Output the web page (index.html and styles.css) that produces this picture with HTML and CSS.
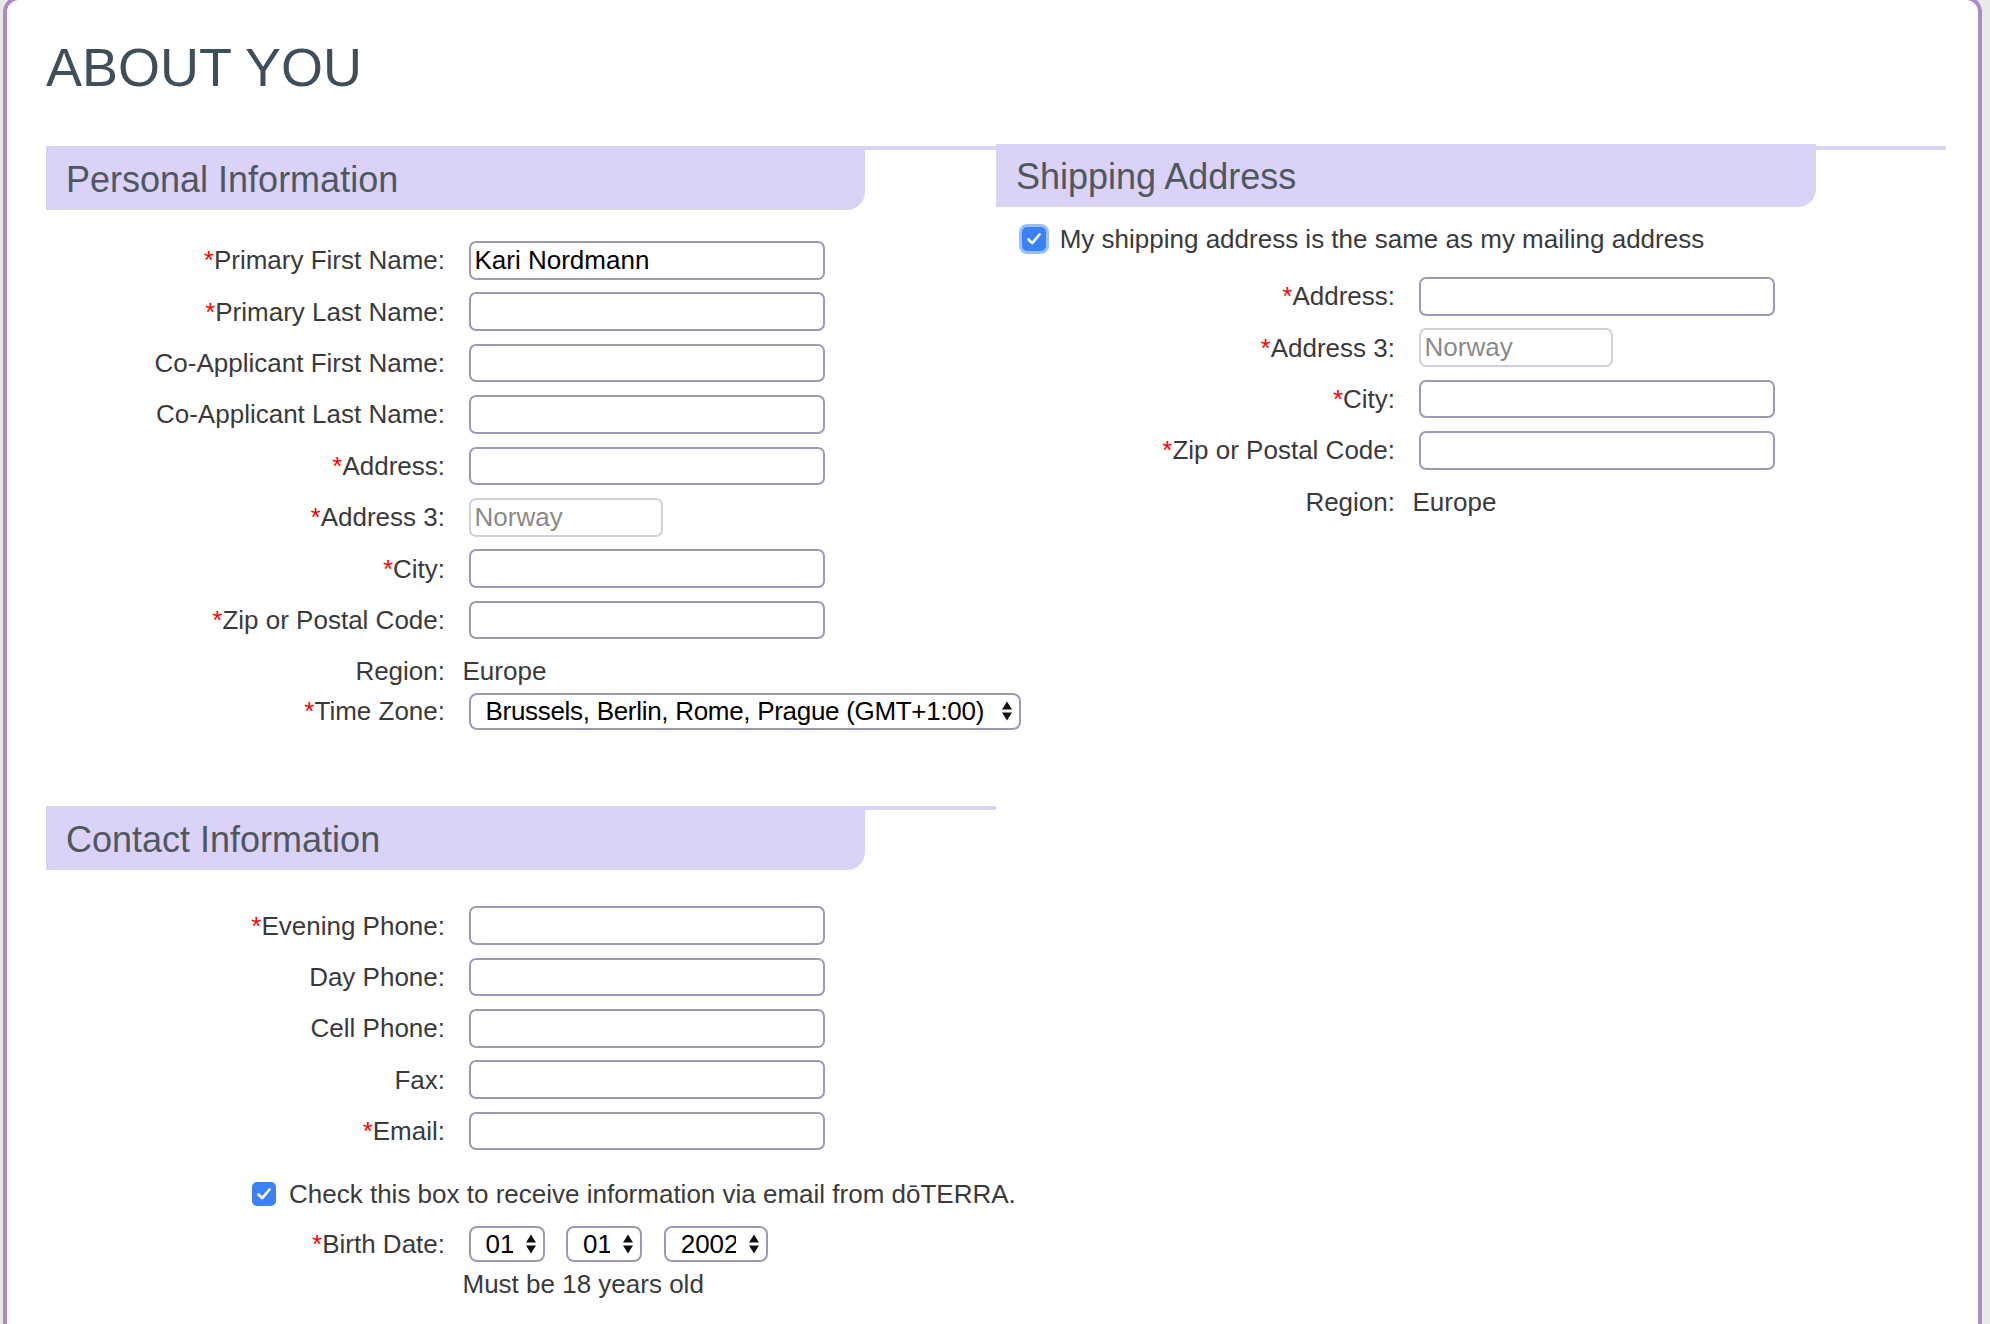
FILE: index.html
```
<!DOCTYPE html>
<html lang="en">
<head>
    <meta charset="UTF-8">
    <meta name="viewport" content="width=device-width, initial-scale=1.0">
    <title>About You</title>
    <link rel="stylesheet" href="styles.css">
</head>
<body>
    <div class="card">
        <h1 class="page-title">ABOUT YOU</h1>

        <div class="columns">
            <div class="col col-left">
                <section class="section">
                    <div class="section-head"><h2 class="section-tab">Personal Information</h2></div>
                    <div class="form personal-form">
                        <div class="row">
                            <label class="label"><span class="req">*</span>Primary First Name:</label>
                            <input class="text-input" type="text" value="Kari Nordmann">
                        </div>
                        <div class="row">
                            <label class="label"><span class="req">*</span>Primary Last Name:</label>
                            <input class="text-input" type="text">
                        </div>
                        <div class="row">
                            <label class="label">Co-Applicant First Name:</label>
                            <input class="text-input" type="text">
                        </div>
                        <div class="row">
                            <label class="label">Co-Applicant Last Name:</label>
                            <input class="text-input" type="text">
                        </div>
                        <div class="row">
                            <label class="label"><span class="req">*</span>Address:</label>
                            <input class="text-input" type="text">
                        </div>
                        <div class="row">
                            <label class="label"><span class="req">*</span>Address 3:</label>
                            <input class="text-input short" type="text" value="Norway" readonly>
                        </div>
                        <div class="row">
                            <label class="label"><span class="req">*</span>City:</label>
                            <input class="text-input" type="text">
                        </div>
                        <div class="row">
                            <label class="label"><span class="req">*</span>Zip or Postal Code:</label>
                            <input class="text-input" type="text">
                        </div>
                        <div class="row row-region">
                            <span class="label">Region:</span>
                            <span class="value">Europe</span>
                        </div>
                        <div class="row row-tz">
                            <label class="label"><span class="req">*</span>Time Zone:</label>
                            <div class="select-wrap tz">
                                <select class="select"><option>Brussels, Berlin, Rome, Prague (GMT+1:00)</option></select>
                                <svg class="arrows" width="10" height="20" viewBox="0 0 10 20"><path d="M0 8.5 L5 0.5 L10 8.5 Z M0 11.5 L10 11.5 L5 19.5 Z" fill="#111"/></svg>
                            </div>
                        </div>
                    </div>
                </section>

                <section class="section contact">
                    <div class="section-head"><h2 class="section-tab">Contact Information</h2></div>
                    <div class="form contact-form">
                        <div class="row">
                            <label class="label"><span class="req">*</span>Evening Phone:</label>
                            <input class="text-input" type="text">
                        </div>
                        <div class="row">
                            <label class="label">Day Phone:</label>
                            <input class="text-input" type="text">
                        </div>
                        <div class="row">
                            <label class="label">Cell Phone:</label>
                            <input class="text-input" type="text">
                        </div>
                        <div class="row">
                            <label class="label">Fax:</label>
                            <input class="text-input" type="text">
                        </div>
                        <div class="row">
                            <label class="label"><span class="req">*</span>Email:</label>
                            <input class="text-input" type="text">
                        </div>
                        <div class="check-row optin">
                            <span class="checkbox"><svg width="24" height="24" viewBox="0 0 24 24"><path d="M6.5 12.5 L10.2 16.2 L17.5 7.5" fill="none" stroke="#fff" stroke-width="2.6" stroke-linecap="round" stroke-linejoin="round"/></svg></span>
                            <span>Check this box to receive information via email from dōTERRA.</span>
                        </div>
                        <div class="row row-birth">
                            <label class="label"><span class="req">*</span>Birth Date:</label>
                            <div class="birth">
                                <div class="select-wrap day">
                                    <select class="select"><option>01</option></select>
                                    <svg class="arrows" width="10" height="20" viewBox="0 0 10 20"><path d="M0 8.5 L5 0.5 L10 8.5 Z M0 11.5 L10 11.5 L5 19.5 Z" fill="#111"/></svg>
                                </div>
                                <div class="select-wrap day">
                                    <select class="select"><option>01</option></select>
                                    <svg class="arrows" width="10" height="20" viewBox="0 0 10 20"><path d="M0 8.5 L5 0.5 L10 8.5 Z M0 11.5 L10 11.5 L5 19.5 Z" fill="#111"/></svg>
                                </div>
                                <div class="select-wrap year">
                                    <select class="select"><option>2002</option></select>
                                    <svg class="arrows" width="10" height="20" viewBox="0 0 10 20"><path d="M0 8.5 L5 0.5 L10 8.5 Z M0 11.5 L10 11.5 L5 19.5 Z" fill="#111"/></svg>
                                </div>
                            </div>
                        </div>
                        <div class="row row-note">
                            <span></span>
                            <span class="value">Must be 18 years old</span>
                        </div>
                    </div>
                </section>
            </div>

            <div class="col col-right">
                <section class="section shipping">
                    <div class="section-head"><h2 class="section-tab">Shipping Address</h2></div>
                    <div class="check-row same">
                        <span class="checkbox focused"><svg width="24" height="24" viewBox="0 0 24 24"><path d="M6.5 12.5 L10.2 16.2 L17.5 7.5" fill="none" stroke="#fff" stroke-width="2.6" stroke-linecap="round" stroke-linejoin="round"/></svg></span>
                        <span>My shipping address is the same as my mailing address</span>
                    </div>
                    <div class="form shipping-form">
                        <div class="row">
                            <label class="label"><span class="req">*</span>Address:</label>
                            <input class="text-input" type="text">
                        </div>
                        <div class="row">
                            <label class="label"><span class="req">*</span>Address 3:</label>
                            <input class="text-input short" type="text" value="Norway" readonly>
                        </div>
                        <div class="row">
                            <label class="label"><span class="req">*</span>City:</label>
                            <input class="text-input" type="text">
                        </div>
                        <div class="row">
                            <label class="label"><span class="req">*</span>Zip or Postal Code:</label>
                            <input class="text-input" type="text">
                        </div>
                        <div class="row row-region">
                            <span class="label">Region:</span>
                            <span class="value">Europe</span>
                        </div>
                    </div>
                </section>
            </div>
        </div>
    </div>
</body>
</html>
```

FILE: styles.css
```
html, body {
    overflow: hidden;
}

body {
    margin: 0;
    padding: 0;
    background-color: #e8e8e8;
    font-family: 'Liberation Sans', Arial, sans-serif;
    color: #3a3a3a;
}

.card {
    box-sizing: border-box;
    width: 1979px;
    height: calc(100vh + 40px);
    margin: -4px 0 0 3px;
    padding: 0 10px 0 39px;
    background-color: #fff;
    border: 4px solid #a98cc6;
    border-radius: 16px;
}

.page-title {
    margin: 36px 0 48px;
    font-size: 54px;
    line-height: 62px;
    font-weight: normal;
    color: #3e4e5a;
}

.columns {
    display: grid;
    grid-template-columns: 950px 972px;
}

/* section header: thin line with a tab hanging under it */
.section-head {
    border-top: 4px solid #dbd2f8;
}

.section-tab {
    box-sizing: border-box;
    width: 819px;
    height: 60px;
    margin: 0;
    padding-left: 20px;
    background-color: #dbd2f8;
    border-bottom-right-radius: 18px;
    font-size: 36px;
    line-height: 60px;
    font-weight: normal;
    color: #4f585f;
}

.shipping .section-head {
    margin-right: 22px;
}

.shipping .section-tab {
    width: 820px;
    height: 63px;
    margin-top: -6px;
    padding-top: 3px;
}

.contact {
    margin-top: 76px;
}

.form {
    display: flex;
    flex-direction: column;
    gap: 12.8px;
}

.personal-form {
    margin-top: 31px;
}

.contact-form {
    margin-top: 36.7px;
}

.shipping-form {
    margin-top: 22.6px;
}

.row {
    display: grid;
    grid-template-columns: 399px 1fr;
    column-gap: 17.5px;
    align-items: center;
    font-size: 26px;
    line-height: 30px;
    white-space: nowrap;
}

.label {
    text-align: right;
    color: #3a3a3a;
}

.req {
    color: #f00;
}

.value {
    color: #3a3a3a;
}

.text-input {
    box-sizing: border-box;
    width: 356px;
    height: 38.6px;
    margin: 0 0 0 6px;
    padding: 0 4px;
    border: 2px solid #9b9bb2;
    border-radius: 7px;
    background: #fff;
    font-family: inherit;
    font-size: 26px;
    color: #000;
    outline: none;
}

.text-input.short {
    width: 194px;
    border-color: #d0d0dc;
    color: #8a8a8a;
}

.row-region {
    margin-top: 4.2px;
}

.row-tz {
    margin-top: -6.2px;
}

.select-wrap {
    position: relative;
    margin-left: 6px;
    height: 36.6px;
}

.select {
    box-sizing: border-box;
    width: 100%;
    height: 36.6px;
    padding: 0 30px 0 15px;
    -webkit-appearance: none;
    appearance: none;
    background: #fff;
    border: 2px solid #9b9bb2;
    border-radius: 8px;
    font-family: inherit;
    font-size: 26px;
    color: #000;
    outline: none;
}

.arrows {
    position: absolute;
    right: 9px;
    top: 8px;
    pointer-events: none;
}

.select-wrap.tz {
    width: 552px;
}

.tz .select {
    padding-right: 18px;
    letter-spacing: -0.3px;
}

.birth {
    display: flex;
    gap: 15.6px;
}

.select-wrap.day {
    width: 76px;
}

.select-wrap.year {
    width: 104px;
}

.check-row {
    display: flex;
    align-items: center;
    gap: 13px;
    font-size: 26px;
    line-height: 30px;
    color: #3a3a3a;
    white-space: nowrap;
}

.checkbox {
    display: block;
    flex: none;
    width: 24px;
    height: 24px;
    border-radius: 5px;
    background-color: #3a82f6;
}

.checkbox svg {
    display: block;
}

.checkbox.focused {
    box-shadow: 0 0 0 3px #9cc0fa;
}

.optin {
    margin-top: 16.1px;
    padding-left: 206px;
}

.row-birth {
    margin-top: 3.8px;
}

.row-note {
    margin-top: -6.4px;
}

.same {
    margin-top: 17.4px;
    padding-left: 25.7px;
    gap: 14px;
}
```
